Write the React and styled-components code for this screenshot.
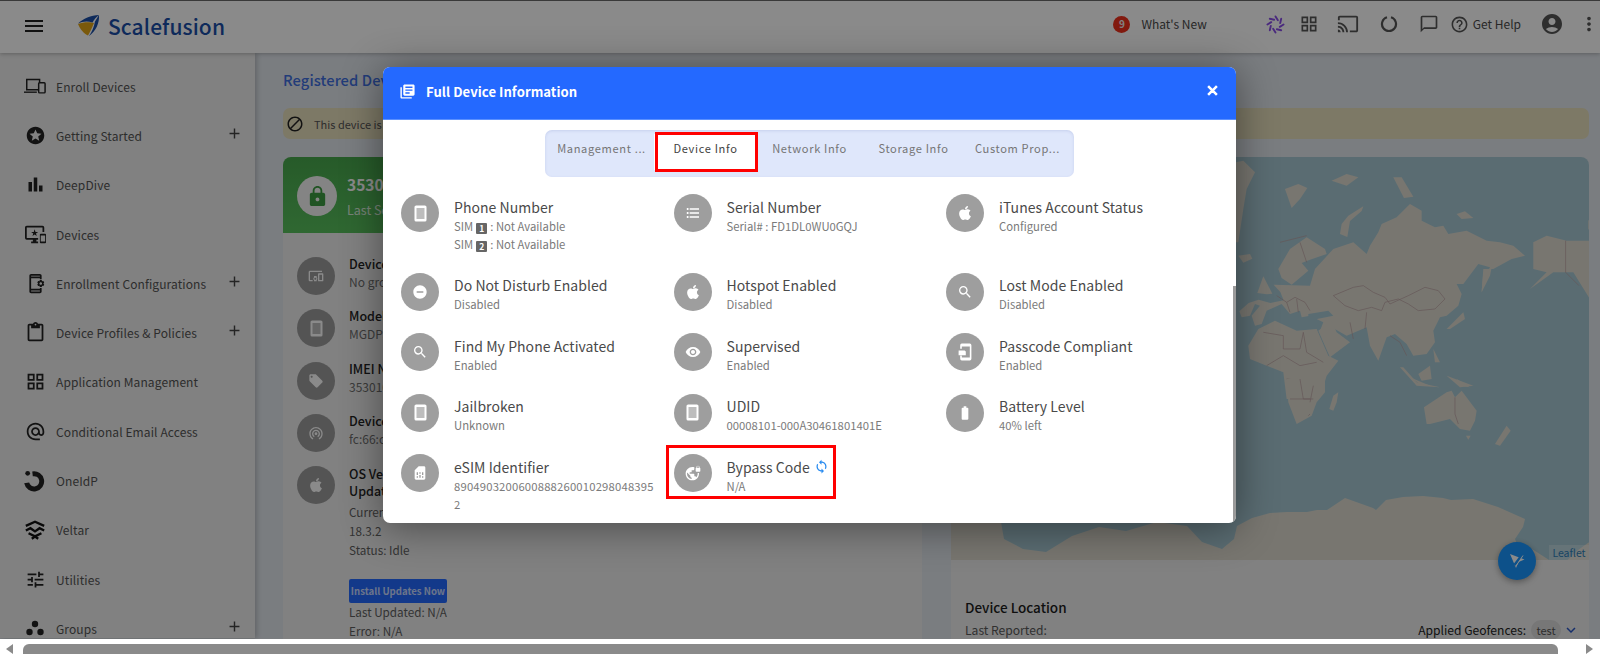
import React from "react";
import styled, { createGlobalStyle } from "styled-components";
import {
  MdMenu, MdStars, MdBarChart, MdImportantDevices, MdOutlineAppSettingsAlt, MdOutlineContentPaste, MdOutlineGridView,
  MdAlternateEmail, MdTune, MdAdd, MdOutlineCast, MdChatBubbleOutline, MdHelpOutline, MdAccountCircle, MdMoreVert,
  MdClose, MdLibraryBooks, MdFormatListBulleted, MdDoNotDisturbOn, MdSearch, MdVisibility, MdBatteryFull, MdSimCard,
  MdVpnLock, MdSync, MdBlock, MdLock, MdLocalOffer, MdWifiTethering, MdKeyboardArrowDown, MdDevicesOther,
} from "react-icons/md";
import { FaApple } from "react-icons/fa";

const FONT = `"Noto Sans CJK JP", "Noto Sans", sans-serif`;

const Global = createGlobalStyle`
  html, body { margin: 0; padding: 0; background: #fff; overflow: hidden; }
  body { font-family: ${FONT}; }
  *, *::before, *::after { box-sizing: border-box; }
`;

const Page = styled.div`
  width: 1600px; height: 654px; display: flex; flex-direction: column; overflow: hidden;
`;
const Viewport = styled.div`
  position: relative; height: 639px; flex: none; overflow: hidden; background: #e2e7ed;
`;
const Header = styled.header`
  height: 53px; background: #fff; border-top: 1px solid #6a6a6a; display: flex; align-items: center;
  box-shadow: 0 1px 4px rgba(0,0,0,.25); position: relative; z-index: 1; padding: 0 0 6px 22px;
`;
const HeaderLeft = styled.div`
  display: flex; align-items: center; padding-top: 3px;
`;
const Logo = styled.div`
  display: flex; align-items: center; margin-left: 31px; gap: 8px;
  font-size: 21px; font-weight: 500; color: #1b4fa8; letter-spacing: .1px;
`;
const HeaderRight = styled.div`
  margin-left: auto; display: flex; align-items: center;
`;
const HeadSlot = styled.div`
  display: flex; align-items: center; margin-left: ${p => p.$ml}px; color: ${p => p.$c || "#555"};
  font-size: 12px; line-height: 1;
`;
const Badge = styled.span`
  width: 17px; height: 17px; border-radius: 50%; background: #f0311c; color: #eee; font-size: 10px; font-weight: 700;
  display: flex; align-items: center; justify-content: center;
`;
const Body = styled.div`
  display: flex; height: 585px;
`;
const Sidebar = styled.nav`
  width: 255px; flex: none; background: #eee; padding-top: 8.5px; box-shadow: 2px 0 5px rgba(0,0,0,.2); position: relative;
`;
const NavItem = styled.div`
  height: 49.3px; display: flex; align-items: center; padding: 0 12px 0 24px; font-size: 12px; color: #545454;
  letter-spacing: .1px;
`;
const NavIcon = styled.span`
  width: 22px; margin-right: 10px; display: flex; justify-content: center; color: #222; font-size: 21px; flex: none;
`;
const NavPlus = styled.span`
  margin-left: auto; display: flex; font-size: 17px; color: #444; margin-top: -4px;
`;
const Main = styled.main`
  flex: 1; padding: 0 11px 0 28px; min-width: 0;
`;
const PageTitle = styled.h1`
  margin: 0; height: 55px; padding-top: 17px; font-size: 14.7px; line-height: 20px; font-weight: 500; color: #3f6fe0;
  letter-spacing: .1px;
`;
const Banner = styled.div`
  height: 31px; border-radius: 7px; background: #e8dfbd; display: flex; align-items: center; padding-left: 3px;
  font-size: 11px; color: #555; gap: 10px;
`;
const Cards = styled.div`
  display: grid; grid-template-columns: 639px 638px; column-gap: 29px; margin-top: 18px;
`;
const Card = styled.section`
  background: #eee; border-radius: 8px 8px 0 0; height: 490px; position: relative;
`;
const CardHead = styled.div`
  height: 76px; border-radius: 8px 8px 0 0; background: linear-gradient(#48a84d, #58c05d);
  padding: 19px 0 0 14px; display: flex; gap: 10px; color: #fff;
`;
const LockCircle = styled.div`
  width: 40px; height: 40px; border-radius: 50%; background: #f4f4f4; color: #3c9c41; font-size: 23px; flex: none;
  display: flex; align-items: center; justify-content: center;
`;
const HeadTitle = styled.div`
  font-size: 15.5px; font-weight: 700; line-height: 16px;
`;
const HeadSub = styled.div`
  font-size: 12.5px; margin-top: 9px; line-height: 18px; opacity: .8;
`;
const InfoList = styled.div`
  padding: 24px 14px 0;
`;
const InfoRow = styled.div`
  display: flex; gap: 14px; height: 52.3px; align-items: flex-start;
`;
const GreyCircle = styled.span`
  width: 38px; height: 38px; border-radius: 50%; background: ${p => p.$dark ? "#9c9c9c" : "#9e9e9e"}; color: #fff;
  display: flex; align-items: center; justify-content: center; font-size: 16px; flex: none;
`;
const InfoTitle = styled.div`
  font-size: 12.5px; line-height: 18px; color: #222; font-weight: 500; margin-top: -2px;
`;
const OsTitle = styled(InfoTitle)`
  line-height: 16.5px; margin-top: 0;
`;
const InfoSub = styled.div`
  font-size: 12px; line-height: 18px; color: #6e6e6e;
`;
const OsBlock = styled.div`
  padding: 0 0 0 52px; margin-top: -16px; font-size: 11.7px; line-height: 19px; color: #5f5f5f;
`;
const InstallBtn = styled.div`
  width: 98px; height: 24px; margin: 20px 0 -1px; border-radius: 2px; background: #2469ff; color: rgba(255,255,255,.75);
  font-size: 9.6px; font-weight: 700; line-height: 24px; text-align: center; white-space: nowrap;
`;
const Map = styled.div`
  height: 403px; border-radius: 8px 8px 0 0; overflow: hidden; background: #a7c8d3; position: relative;
`;
const MapSvg = styled.svg`
  display: block; width: 638px; height: 403px;
`;
const Leaflet = styled.span`
  position: absolute; right: 0; bottom: 0; height: 15px; width: 40px; background: rgba(255,255,255,.25);
  font-size: 10.5px; line-height: 15px; text-align: center; color: #2f7fb8;
`;
const Fab = styled.div`
  position: absolute; left: 547px; top: 385px; width: 38px; height: 38px; border-radius: 50%; background: #1896ff;
  box-shadow: 0 2px 6px rgba(0,0,0,.35); display: flex; align-items: center; justify-content: center; z-index: 2;
`;
const LocBlock = styled.div`
  padding: 37px 9px 0 14px;
`;
const LocTitle = styled.div`
  font-size: 13.5px; line-height: 20px; color: #1c1c1c; font-weight: 500;
`;
const LocRow = styled.div`
  display: flex; justify-content: space-between; align-items: center; margin-top: 2px; font-size: 12.1px; line-height: 22px; color: #5a5a5a;
`;
const Geo = styled.div`
  display: flex; align-items: center; color: #222;
`;
const Pill = styled.span`
  margin-left: 5px; width: 30px; height: 20px; border-radius: 10px; background: #dcdcdc; color: #555; font-size: 11px;
  line-height: 20px; text-align: center;
`;
const Chevron = styled.span`
  display: flex; margin-left: 1px; color: #2a56c6; font-size: 18px;
`;
const Overlay = styled.div`
  position: absolute; inset: 0; background: rgba(0,0,0,.46); z-index: 5;
`;
const Modal = styled.div`
  position: relative; margin: 67px 0 0 383px; width: 853px; height: 456px; background: #fff; border-radius: 7px; overflow: hidden;
  box-shadow: 0 4px 40px rgba(0,0,0,.45);
`;
const ModalHead = styled.div`
  height: 53px; background: #2469ff; border-bottom: 1px solid #5b90ff; display: flex; align-items: center; padding: 0 16px 3px 16px;
  color: #fff;
`;
const ModalTitle = styled.div`
  font-size: 13.1px; font-weight: 700; margin-left: 10px; letter-spacing: .05px;
`;
const CloseBtn = styled.span`
  margin-left: auto; display: flex; font-size: 15px; margin-top: -3px;
  svg path:last-child { stroke: #fff; stroke-width: 2; }
`;
const Tabs = styled.div`
  width: 529px; height: 47px; margin: 10px auto 0; background: #dfe7fb; border-radius: 7px; padding: 4px 4.5px 0; display: flex; align-items: flex-start;
  box-shadow: inset 0 1px 3px rgba(60,80,160,.15);
`;
const Tab = styled.div`
  position: relative; width: 104px; height: 36px; line-height: 28px; text-align: center; font-size: 11.1px; letter-spacing: .65px; white-space: nowrap;
  color: ${p => p.$active ? "#424242" : "#757575"}; background: ${p => p.$active ? "#fff" : "transparent"};
  ${p => p.$active ? `&::after { content: ""; position: absolute; inset: -2px 0 -2px 1.5px; border: 3px solid #f00; }` : ""}
`;
const Grid = styled.div`
  display: grid; grid-template-columns: repeat(3, 272.5px); row-gap: 20px; padding: 17px 0 0 18px; align-items: start;
`;
const Item = styled.div`
  position: relative; display: flex; gap: 15px; padding-right: 18px;
  ${p => p.$marked ? `&::after { content: ""; position: absolute; left: -8px; top: -9px; width: 170px; height: 54px; border: 3px solid #f00; pointer-events: none; }` : ""}
`;
const ItemText = styled.div`
  padding-top: 2.5px; min-width: 0; flex: 1;
`;
const ItemTitle = styled.div`
  font-size: 14px; line-height: 20px; color: #4a4a4a; display: flex; align-items: center; letter-spacing: .05px;
`;
const ItemSub = styled.div`
  font-size: 11.3px; line-height: 18px; color: #7a7a7a; overflow-wrap: anywhere;
  letter-spacing: ${p => p.$wide ? ".17px" : "0"};
`;
const SimKey = styled.span`
  display: inline-block; width: 11px; height: 11px; margin: 0 3px 0 3px; border-radius: 1px; background: #666; color: #fff; font-size: 8.5px; line-height: 11px;
  text-align: center; font-weight: 700; vertical-align: -1px;
`;
const SyncIcon = styled.span`
  display: flex; margin-left: 4px; color: #2a8cf0; font-size: 15px;
`;
const ModalThumb = styled.div`
  position: absolute; right: 0; top: 219px; bottom: 0; width: 3px; background: #9a9a9a;
`;
const Scrollbar = styled.div`
  flex: 1; background: #fff; padding-top: 5px; display: flex; align-items: stretch; position: relative;
`;
const Arrow = styled.span`
  width: 0; height: 0; border-top: 5px solid transparent; border-bottom: 5px solid transparent;
  ${p => p.$right ? `border-left: 7px solid #8a8a8a; margin: 0 4px 0 28px;` : `border-right: 7px solid #8a8a8a; margin: 0 10px 0 6px;`}
`;
const Thumb = styled.div`
  width: 1535px; background: #8a8a8a; border-radius: 6px 6px 0 0; height: 14px;
`;

const PhoneGlyph = () => (
  <svg width="13" height="17" viewBox="0 0 13 17"><rect x="0.5" y="0.5" width="12" height="16" rx="1.6" fill="#fff" /><rect x="2.5" y="3" width="8" height="11" fill="#bdbdbd" /></svg>
);
const PasscodeGlyph = () => (
  <svg width="16" height="18" viewBox="0 0 20 22"><path d="M6 0.5h10a2 2 0 0 1 2 2v17a2 2 0 0 1-2 2H6a2 2 0 0 1-2-2v-4h2v2.5h10V4H6v3H4V2.5a2 2 0 0 1 2-2z" fill="#fff" /><path d="M2 9h7.5l1.5 1.5V15H2z" fill="#fff" /></svg>
);
const LaptopPhone = () => (
  <svg width="22" height="16" viewBox="0 0 24 17" fill="none"><path d="M3 1.5h14v11H3z" stroke="currentColor" strokeWidth="1.6" /><path d="M0 14.5h14v1.5H0z" fill="currentColor" /><rect x="16" y="5" width="7" height="11" rx="1" fill="#eee" stroke="currentColor" strokeWidth="1.6" /></svg>
);
const OneIdp = () => (
  <svg width="24" height="24" viewBox="0 0 24 24"><circle cx="4" cy="3.6" r="2.6" fill="#222" /><path d="M9 1.5a11 11 0 1 1-8.8 13l5.4-.8a5.6 5.6 0 1 0 4-6.8z" fill="#222" /></svg>
);
const Veltar = () => (
  <svg width="24" height="24" viewBox="0 0 24 24" fill="none" stroke="#111" strokeWidth="2.6"><path d="M2 7.5 12 3l10 4.5" /><path d="M2 12.5 7 10l5 3.5L17 10l5 2.5" /><path d="M5 15.5 12 19l7-3.5" /><path d="M8.5 21.5 12 19l3.5 2.5" /></svg>
);
const GroupsIcon = () => (
  <svg width="18" height="16" viewBox="0 0 18 16" fill="#222"><circle cx="9" cy="4" r="3.2" /><circle cx="3.5" cy="12" r="3.2" /><circle cx="14.5" cy="12" r="3.2" /></svg>
);
const LogoMark = () => (
  <svg width="23" height="23" viewBox="0 0 23 23">
    <path d="M1 10C6 8 13 8 17 9c-2 5-4 9-6 12.5C7 20 3 15 1 10z" fill="#e2a516" />
    <path d="M1 9.5C6 5 14 1 22 1c-3 2-5 5-6.5 7.5C10 6.5 5 7.5 1 9.5z" fill="#1b4fa8" />
    <path d="M22 1c.5 8-3 16-10 21 3-4 5-9 6-14.5z" fill="#1b4fa8" />
  </svg>
);
const Spinner = () => (
  <svg width="19" height="19" viewBox="0 0 20 20" stroke="#8a4fe8" strokeWidth="2" strokeLinecap="round">
    {[0, 45, 90, 135, 180, 225, 270, 315].map(a => <line key={a} x1="10" y1="1.5" x2="12.5" y2="5.5" transform={`rotate(${a} 10 10)`} />)}
  </svg>
);
const Ring = () => (
  <svg width="18" height="18" viewBox="0 0 18 18" fill="none" stroke="#555" strokeWidth="2.2"><path d="M11 2.3a7 7 0 1 1-4 0" /></svg>
);
const FabIcon = () => (
  <svg width="20" height="20" viewBox="0 0 20 20">
    <path d="M3 3 17.5 8.5 11.5 11 9 17z" fill="#fff" />
    <path d="M15 4 7.5 14" stroke="#1896ff" strokeWidth="2.6" />
    <path d="M16 4.5 9 15" stroke="#fff" strokeWidth="1" />
  </svg>
);

const Land = "#dedbd0";
const MapArt = () => (
  <MapSvg viewBox="951 158 638 403">
    <g transform="translate(1200 100) scale(.3333)" fill={Land} stroke="none">
      <path d="M108 190l22-5 35 35-25 50-10 60-15 100-7 0z" />
      <path d="M115 470l35-5 7 14-27 12z" />
      <path d="M255 270l40-15 27 12-22 33-25 27z" />
      <path d="M395 245l45-20 35 10-35 25z" />
      <path d="M580 235l25 0 35 58-28 4z" />
      <path d="M420 405l5-30 20-25 45-28-5 14-35 30-8 48z" />
      <path d="M770 345l25-8 25 20-35 3z" />
      <path d="M235 510l35-60 50-35 55 35 5 15-50 17-25 10 20 23-50 42-30-20z" />
      <path d="M172 582l18-50 27 52-17 2z" />
      <path d="M330 560l15-50 55-60 60-20 40 35 10-25 25-40 10-25 45-20 40-40 35 20 0 30 40 20 25-5 15 25 55-10 60 30 40 5 40 10 35 30-40 10-55 30-30 0-5 70 25-75-35-10-45 60-20 0 15 30-10 35-35 30-20 5-20 40 5 35-25 35-40 5-20-35-35-30-25 10-25 70-25-45-10-55-60 25-45-25-35 10 10-25-40-20-25 5-5-20-30 10-25-30-45 20-15 40-20 5-10-30 25-30-15-5-15 35-25 5-7-18 28-25 30-10 35 10 40-8-10-25-20-22z" />
      <path d="M145 740l30-50 50-25 65 30 60-5 35 80 30 15-35 45-15 50-10 20h-95l-10-80-50-20-50-20z" />
      <path d="M355 695l35 80 60-45-40-30-15-35z" />
      <path d="M325 645l60-10 15 15-75 15z" fill="#a7c8d3" />
      <path d="M1000 430l40-20 60 15 70 0v175l-50-80-60 0-70 50 50-50-40-10z" />
      <path d="M1165 365l5-5v35l-5-5z" />
      <path d="M600 805l50 55 70 5-70-15-40-45z" />
      <path d="M655 825l35-25 5 40-30 5z" />
      <path d="M700 750l20 40-15 0z" />
      <path d="M740 830l80 30-40 5z" />
      <path d="M845 580l5-60 25-15-5 25z" />
      <path d="M740 690l50-50 5 20-45 30z" />
      <g fill="none" stroke="#b99ea0" strokeWidth="2">
        <path d="M400 590l60-25 30-5 30 20 35 15 15 20 55-25 50-25 40 10 20 25-30 30-50 5-30-20-30-15-40 10-10 25-30-10-40 10-40-15z" />
        <path d="M230 590l30 20 25-15 30 15 15 25M260 610l10 30M290 600l5 40M240 430l80-20M300 430l20 60" />
        <path d="M190 700l60 10 0 40 50 0 10-50 10 60 50 30M200 800l50-30 50 30 50-10M260 840l80 10 10 50M280 860l-10 40M450 670l10 50M500 640l-5 50M570 710l30 20 20 40" />
        <path d="M1097 425v95l40 40" />
      </g>
    </g>
    <g transform="translate(1230 380) scale(.3333)" fill={Land}>
      <path d="M170 0h115l0 40-25 30-15 40-45 25-25-65z" />
      <path d="M298 90l12-40 15-10-5 30-10 25z" />
      <path d="M582 85l68-45 15-5 10 20 20-20 45 60-5 30-15 30-30-5-30-30-60 15-10 0z" />
      <path d="M708 170h14l-7 12z" />
      <path d="M795 195l35-55 12 15-32 45z" />
      <path d="M540-5l60 25-30-5z" />
      <path d="M680 0l40 25-30-5z" />
      <g fill="none" stroke="#b99ea0" strokeWidth="2"><path d="M210 0l10 60 30 0M180 60l60 0M250 20l-10 50M235 110l5-5M675 55v50l10 30" /></g>
    </g>
    <path fill={Land} d="M951 561V523h50l3 17 19 10 23 3 26-16 27-9 27 4 31-9 30 4 15 16 20 7 12-10 3-13 15-8 18-5 17-1 20 0 10-2 10 0 18-12 28 10 3 2 10-10 17-3 20-1 20 2 8 2 22-1 25 8 27 12-2 8-8 12 5 12 12-2 28 18 18-17 14-10 26-10v38z" />
  </MapSvg>
);

const nav = [
  ["Enroll Devices", <LaptopPhone />],
  ["Getting Started", <MdStars />, true],
  ["DeepDive", <MdBarChart />],
  ["Devices", <MdImportantDevices />],
  ["Enrollment Configurations", <MdOutlineAppSettingsAlt />, true],
  ["Device Profiles & Policies", <MdOutlineContentPaste />, true],
  ["Application Management", <MdOutlineGridView />],
  ["Conditional Email Access", <MdAlternateEmail />],
  ["OneIdP", <OneIdp />],
  ["Veltar", <Veltar />],
  ["Utilities", <MdTune />],
  ["Groups", <GroupsIcon />, true],
];

const info = [
  { t: "Phone Number", i: <PhoneGlyph />, s: [<>SIM<SimKey>1</SimKey>: Not Available</>, <>SIM<SimKey>2</SimKey>: Not Available</>] },
  { t: "Serial Number", i: <MdFormatListBulleted />, s: ["Serial# : FD1DL0WU0GQJ"] },
  { t: "iTunes Account Status", i: <FaApple />, s: ["Configured"] },
  { t: "Do Not Disturb Enabled", i: <MdDoNotDisturbOn />, s: ["Disabled"] },
  { t: "Hotspot Enabled", i: <FaApple />, s: ["Disabled"] },
  { t: "Lost Mode Enabled", i: <MdSearch />, s: ["Disabled"] },
  { t: "Find My Phone Activated", i: <MdSearch />, s: ["Enabled"] },
  { t: "Supervised", i: <MdVisibility />, s: ["Enabled"] },
  { t: "Passcode Compliant", i: <PasscodeGlyph />, s: ["Enabled"] },
  { t: "Jailbroken", i: <PhoneGlyph />, s: ["Unknown"] },
  { t: "UDID", i: <PhoneGlyph />, s: ["00008101-000A30461801401E"] },
  { t: "Battery Level", i: <MdBatteryFull />, s: ["40% left"] },
  { t: "eSIM Identifier", i: <MdSimCard />, s: ["89049032006008882600102980483952"], wide: true },
  { t: "Bypass Code", i: <MdVpnLock />, s: ["N/A"], marked: true, sync: true },
];

const tabs = ["Management ...", "Device Info", "Network Info", "Storage Info", "Custom Prop..."];

const rows = [
  ["Device Group", "No group", <MdDevicesOther />],
  ["Model", "MGDP3", <PhoneGlyph />],
  ["IMEI Number", "353010", <MdLocalOffer />],
  ["Device MAC", "fc:66:cf", <MdWifiTethering />],
];

export default function App() {
  return (
    <Page>
      <Global />
      <Viewport>
        <Header>
          <HeaderLeft>
            <MdMenu size={24} color="#222" />
            <Logo><LogoMark />Scalefusion</Logo>
          </HeaderLeft>
          <HeaderRight>
            <HeadSlot $ml={0}><Badge>9</Badge></HeadSlot>
            <HeadSlot $ml={11} $c="#4a4a4a">What's New</HeadSlot>
            <HeadSlot $ml={59}><Spinner /></HeadSlot>
            <HeadSlot $ml={14}><MdOutlineGridView size={20} /></HeadSlot>
            <HeadSlot $ml={18}><MdOutlineCast size={22} /></HeadSlot>
            <HeadSlot $ml={21}><Ring /></HeadSlot>
            <HeadSlot $ml={21}><MdChatBubbleOutline size={20} /></HeadSlot>
            <HeadSlot $ml={11}><MdHelpOutline size={19} /></HeadSlot>
            <HeadSlot $ml={4} $c="#4a4a4a">Get Help</HeadSlot>
            <HeadSlot $ml={19}><MdAccountCircle size={24} /></HeadSlot>
            <HeadSlot $ml={14}><MdMoreVert size={22} /></HeadSlot>
          </HeaderRight>
        </Header>
        <Body>
          <Sidebar>
            {nav.map(([label, icon, plus]) => (
              <NavItem key={label}>
                <NavIcon>{icon}</NavIcon>{label}
                {plus && <NavPlus><MdAdd /></NavPlus>}
              </NavItem>
            ))}
          </Sidebar>
          <Main>
            <PageTitle>Registered Devices</PageTitle>
            <Banner><MdBlock size={18} color="#222" />This device is locked</Banner>
            <Cards>
              <Card>
                <CardHead>
                  <LockCircle><MdLock /></LockCircle>
                  <div><HeadTitle>353010</HeadTitle><HeadSub>Last Seen</HeadSub></div>
                </CardHead>
                <InfoList>
                  {rows.map(([t, s, i]) => (
                    <InfoRow key={t}>
                      <GreyCircle $dark>{i}</GreyCircle>
                      <div><InfoTitle>{t}</InfoTitle><InfoSub>{s}</InfoSub></div>
                    </InfoRow>
                  ))}
                  <InfoRow>
                    <GreyCircle $dark><FaApple /></GreyCircle>
                    <OsTitle>OS Version<br />Updates</OsTitle>
                  </InfoRow>
                  <OsBlock>
                    Current<br />18.3.2<br />Status: Idle
                    <InstallBtn>Install Updates Now</InstallBtn>
                    Last Updated: N/A<br />Error: N/A
                  </OsBlock>
                </InfoList>
              </Card>
              <Card>
                <Map><MapArt /><Leaflet>Leaflet</Leaflet></Map>
                <Fab><FabIcon /></Fab>
                <LocBlock>
                  <LocTitle>Device Location</LocTitle>
                  <LocRow>
                    <span>Last Reported:</span>
                    <Geo>Applied Geofences:<Pill>test</Pill><Chevron><MdKeyboardArrowDown /></Chevron></Geo>
                  </LocRow>
                </LocBlock>
              </Card>
            </Cards>
          </Main>
        </Body>
        <Overlay>
          <Modal>
            <ModalHead>
              <MdLibraryBooks size={17} />
              <ModalTitle>Full Device Information</ModalTitle>
              <CloseBtn><MdClose /></CloseBtn>
            </ModalHead>
            <Tabs>
              {tabs.map((t, n) => <Tab key={t} $active={n === 1}>{t}</Tab>)}
            </Tabs>
            <Grid>
              {info.map(it => (
                <Item key={it.t} $marked={it.marked}>
                  <GreyCircle>{it.i}</GreyCircle>
                  <ItemText>
                    <ItemTitle>{it.t}{it.sync && <SyncIcon><MdSync /></SyncIcon>}</ItemTitle>
                    {it.s.map((line, n) => <ItemSub key={n} $wide={it.wide}>{line}</ItemSub>)}
                  </ItemText>
                </Item>
              ))}
            </Grid>
            <ModalThumb />
          </Modal>
        </Overlay>
      </Viewport>
      <Scrollbar>
        <Arrow />
        <Thumb />
        <Arrow $right />
      </Scrollbar>
    </Page>
  );
}
